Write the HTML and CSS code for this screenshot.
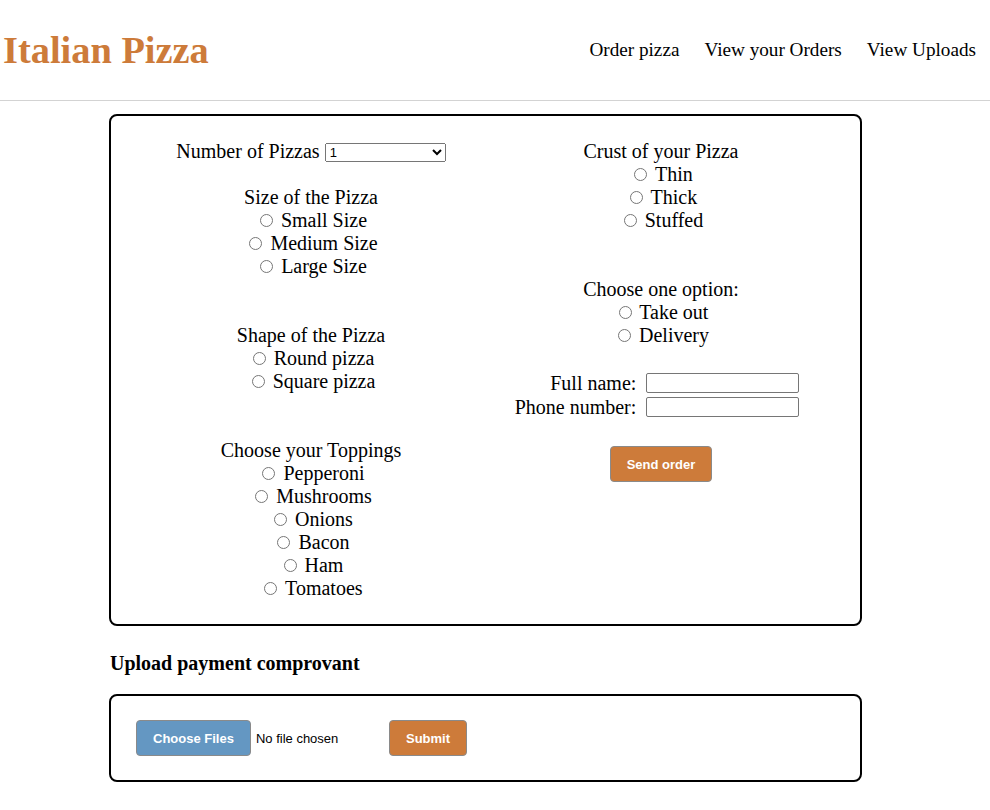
FILE: index.html
```html
<!DOCTYPE html>
<html lang="en">
<head>
<meta charset="utf-8">
<title>Italian Pizza</title>
<link rel="stylesheet" href="styles.css">
</head>
<body>
<header class="site-header">
  <h1 class="brand">Italian Pizza</h1>
  <nav class="nav">
    <a href="#">Order pizza</a>
    <a href="#">View your Orders</a>
    <a href="#">View Uploads</a>
  </nav>
</header>
<main class="page">
  <form class="order-card">
    <div class="col">
      <div class="line">Number of Pizzas <select class="count"><option>1</option><option>2</option><option>3</option></select></div>

      <div class="group gap-small">
        <div class="line">Size of the Pizza</div>
        <label class="line"><input type="radio" name="size"> Small Size</label>
        <label class="line"><input type="radio" name="size"> Medium Size</label>
        <label class="line"><input type="radio" name="size"> Large Size</label>
      </div>

      <div class="group gap-large">
        <div class="line">Shape of the Pizza</div>
        <label class="line"><input type="radio" name="shape"> Round pizza</label>
        <label class="line"><input type="radio" name="shape"> Square pizza</label>
      </div>

      <div class="group gap-large">
        <div class="line">Choose your Toppings</div>
        <label class="line"><input type="radio" name="top1"> Pepperoni</label>
        <label class="line"><input type="radio" name="top2"> Mushrooms</label>
        <label class="line"><input type="radio" name="top3"> Onions</label>
        <label class="line"><input type="radio" name="top4"> Bacon</label>
        <label class="line"><input type="radio" name="top5"> Ham</label>
        <label class="line"><input type="radio" name="top6"> Tomatoes</label>
      </div>
    </div>

    <div class="col">
      <div class="group">
        <div class="line">Crust of your Pizza</div>
        <label class="line"><input type="radio" name="crust"> Thin</label>
        <label class="line"><input type="radio" name="crust"> Thick</label>
        <label class="line"><input type="radio" name="crust"> Stuffed</label>
      </div>

      <div class="group gap-large">
        <div class="line">Choose one option:</div>
        <label class="line"><input type="radio" name="mode"> Take out</label>
        <label class="line"><input type="radio" name="mode"> Delivery</label>
      </div>

      <div class="fields">
        <label class="field-label" for="fullname">Full name:</label>
        <input class="text-input" id="fullname" type="text">
        <label class="field-label" for="phone">Phone number:</label>
        <input class="text-input" id="phone" type="text">
      </div>

      <div class="actions">
        <button class="btn btn-orange" type="button">Send order</button>
      </div>
    </div>
  </form>

  <h3 class="upload-title">Upload payment comprovant</h3>
  <form class="upload-card">
    <input class="file" type="file" multiple>
    <button class="btn btn-orange" type="button">Submit</button>
  </form>
</main>
</body>
</html>
```

FILE: styles.css
```css
html, body {
  margin: 0;
  padding: 0;
  background: #ffffff;
}

body {
  font-family: "Liberation Serif", "Times New Roman", serif;
  color: #000;
}

.site-header {
  display: flex;
  align-items: center;
  justify-content: space-between;
  height: 100px;
  padding: 0 14px 0 3px;
  border-bottom: 1px solid #d3d3d3;
}

.brand {
  margin: 0;
  font-size: 38.4px;
  font-weight: bold;
  color: #cd7b3a;
}

.nav {
  display: flex;
  gap: 25px;
  font-size: 19.2px;
}

.nav a {
  color: #000;
  text-decoration: none;
}

.page {
  width: 753px;
  margin: 13px 0 0 109px;
}

.order-card {
  display: grid;
  grid-template-columns: 350px 350px;
  padding: 24px 24px 24px 25px;
  border: 2px solid #000;
  border-radius: 8px;
  font-size: 20px;
}

.col {
  display: flex;
  flex-direction: column;
}

.line {
  display: block;
  line-height: 23px;
  height: 23px;
  text-align: center;
}

.gap-small {
  margin-top: 23px;
}

.gap-large {
  margin-top: 46px;
}

.count {
  width: 121px;
  height: 19px;
  font-family: "Liberation Sans", Arial, sans-serif;
  font-size: 13px;
  vertical-align: 1px;
}

.fields {
  display: grid;
  grid-template-columns: auto 153px;
  grid-auto-rows: 20px;
  justify-content: center;
  column-gap: 10px;
  row-gap: 4px;
  margin-top: 26px;
  padding-right: 8px;
}

.field-label {
  text-align: right;
  line-height: 20px;
}

.text-input {
  box-sizing: border-box;
  width: 153px;
  height: 20px;
  margin: 0;
  padding: 1px 2px;
  border: 1px solid #767676;
  border-radius: 2px;
  font-family: "Liberation Sans", Arial, sans-serif;
  font-size: 13px;
}

.actions {
  margin-top: 29px;
  text-align: center;
}

.btn {
  height: 36px;
  padding: 0 16px;
  border: 1px solid #8a8a8a;
  border-radius: 4px;
  color: #fff;
  font-family: "Liberation Sans", Arial, sans-serif;
  font-size: 13px;
  font-weight: bold;
  cursor: pointer;
}

.btn-orange {
  background: #cd7b3a;
}

.upload-title {
  margin: 26px 0 19px 1px;
  font-size: 20px;
  line-height: 23px;
  font-weight: bold;
}

.upload-card {
  display: flex;
  align-items: center;
  gap: 4px;
  padding: 24px 24px 24px 25px;
  border: 2px solid #000;
  border-radius: 8px;
}

.file {
  width: 249px;
  margin: 0;
  font-family: "Liberation Sans", Arial, sans-serif;
  font-size: 13px;
  color: #000;
}

.file::file-selector-button {
  height: 36px;
  margin-right: 5px;
  padding: 0 16px;
  border: 1px solid #8a8a8a;
  border-radius: 4px;
  background: #6497c2;
  color: #fff;
  font-family: "Liberation Sans", Arial, sans-serif;
  font-size: 13px;
  font-weight: bold;
}
```
